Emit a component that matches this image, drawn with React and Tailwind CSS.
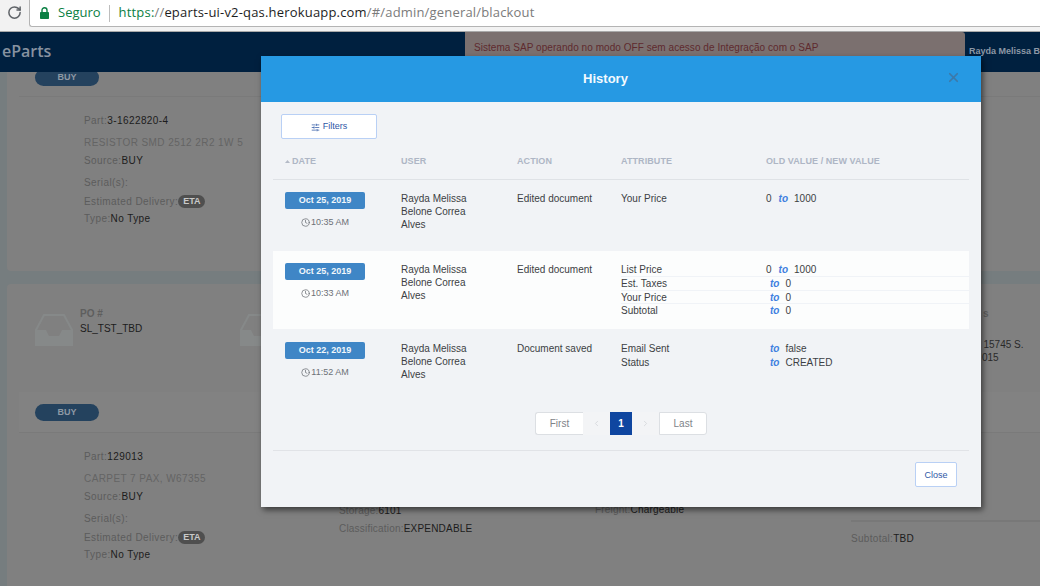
import { RotateCw, X, Clock, SlidersHorizontal, ChevronLeft, ChevronRight } from 'lucide-react'

const HISTORY = [
  {
    date: 'Oct 25, 2019',
    time: '10:35 AM',
    action: 'Edited document',
    rowClass: 'h-[71px] pt-[12px]',
    changes: [{ attr: 'Your Price', from: '0', to: '1000' }],
  },
  {
    date: 'Oct 25, 2019',
    time: '10:33 AM',
    action: 'Edited document',
    rowClass: 'h-[78px] pt-[12px] bg-[#fcfdfd]',
    lined: true,
    changes: [
      { attr: 'List Price', from: '0', to: '1000' },
      { attr: 'Est. Taxes', to: '0' },
      { attr: 'Your Price', to: '0' },
      { attr: 'Subtotal', to: '0' },
    ],
  },
  {
    date: 'Oct 22, 2019',
    time: '11:52 AM',
    action: 'Document saved',
    rowClass: 'h-[71px] pt-[13px]',
    changes: [
      { attr: 'Email Sent', to: 'false' },
      { attr: 'Status', to: 'CREATED' },
    ],
  },
]

const WIDE = 'tracking-[0.42px]'
const TIGHT = 'tracking-[0.2px]'

function Field({ label, value, className = '' }) {
  return (
    <div className={`text-[10px] leading-[13px] text-[#5c5c5c] ${className}`}>
      {label}:<span className="text-[#1c1c1c]">{value}</span>
    </div>
  )
}

function TrayIcon() {
  return (
    <svg width="38" height="32" viewBox="0 0 38 32" className="shrink-0">
      <path d="M9 1h20l8 15v15H1V16z" fill="none" stroke="#868989" strokeWidth="2" />
      <path d="M1 16h10l3 6h10l3-6h10v15H1z" fill="#868989" />
    </svg>
  )
}

function PartBlock({ part, description }) {
  return (
    <div className="pl-[77px] pt-[17px]">
      <Field label="Part" value={part} className={WIDE} />
      <div className={`mt-[9px] text-[10px] leading-[13px] text-[#646464] ${WIDE}`}>{description}</div>
      <Field label="Source" value="BUY" className={`mt-[5px] ${WIDE}`} />
      <Field label="Serial(s)" value="" className={`mt-[9px] ${WIDE}`} />
      <div className={`mt-[6px] flex items-center text-[10px] leading-[13px] text-[#5c5c5c] ${WIDE}`}>
        Estimated Delivery:
        <span className="rounded-full bg-[#4f4f4f] px-[5px] text-[9px] font-bold leading-[13px] tracking-normal text-[#c9c9c9]">ETA</span>
      </div>
      <Field label="Type" value="No Type" className={`mt-[4px] ${WIDE}`} />
    </div>
  )
}

function BuyPill() {
  return (
    <div className="h-[17px] w-[64px] rounded-full bg-[#24425e] text-center text-[9px] font-bold leading-[17px] text-[#8d99a5]">
      BUY
    </div>
  )
}

function BrowserBar() {
  return (
    <div className="flex h-[32px] border-b border-[#a9a9a9] bg-[#f2f2f2] font-['Open_Sans',sans-serif]">
      <div className="flex w-[29px] shrink-0 items-start justify-center pt-[5px]">
        <RotateCw size={15} strokeWidth={2.4} className="text-[#5f6368]" />
      </div>
      <div className="flex h-[27px] flex-1 items-center rounded-bl-[3px] border-b border-l border-[#b4b4b4] bg-white pl-[10px]">
        <svg width="9" height="12" viewBox="0 0 9 12" className="shrink-0">
          <path d="M2 5V3.2a2.5 2.5 0 0 1 5 0V5" fill="none" stroke="#0b8043" strokeWidth="1.4" />
          <rect x="0" y="5" width="9" height="7" rx="0.8" fill="#0b8043" />
        </svg>
        <span className="ml-[9px] text-[13px] text-[#0b8043]">Seguro</span>
        <span className="ml-[8px] mr-[9px] h-[17px] w-px bg-[#bdbdbd]" />
        <span className="text-[13px] tracking-[0.18px] text-[#7b7b7b]">
          <span className="text-[#0b8043]">https:</span>//
          <span className="text-[#1d1d1d]">eparts-ui-v2-qas.herokuapp.com</span>/#/admin/general/blackout
        </span>
      </div>
    </div>
  )
}

function AppHeader() {
  return (
    <div className="relative z-10 flex h-[40px] bg-[#00203f] font-['Liberation_Sans',sans-serif]">
      <div className="w-[465px] shrink-0 pl-[2px] pt-[8px] font-['Open_Sans',sans-serif] text-[16px] font-semibold leading-[22px] text-[#8792a0]">
        eParts
      </div>
      <div className="h-full w-[500px] shrink-0 rounded-bl-[2px] rounded-tr-[3px] bg-[#7b706f] pl-[9px] pt-[9px] text-[10px] leading-[13px] tracking-[0.05px] text-[#5f2a2e]">
        Sistema SAP operando no modo OFF sem acesso de Integração com o SAP
      </div>
      <div className="overflow-hidden whitespace-nowrap pl-[4px] pt-[13px] text-[9px] font-bold leading-[13px] text-[#8d98a6]">
        Rayda Melissa Belone
      </div>
    </div>
  )
}

function PageBehind() {
  return (
    <div className="h-[514px] overflow-hidden bg-[#767d7f] pl-[7px] font-['Liberation_Sans',sans-serif]">
      <div className="h-[199px] rounded-bl-[4px] bg-[#808080]">
        <div className="ml-[12px] flex h-[25px] border-b border-[#7a7a7a] pl-[16px]">
          <div className="-mt-[3px]">
            <BuyPill />
          </div>
        </div>
        <PartBlock part="3-1622820-4" description="RESISTOR SMD 2512 2R2 1W 5" />
      </div>

      <div className="mt-[13px] h-[320px] rounded-tl-[4px] bg-[#808080]">
        <div className="flex h-[108px] pt-[23px]">
          <div className="ml-[28px] mt-[7px]">
            <TrayIcon />
          </div>
          <div className="ml-[7px] w-[160px]">
            <div className="text-[10px] font-bold leading-[13px] text-[#5e5e5e]">PO #</div>
            <div className="mt-[2px] text-[10px] leading-[13px] text-[#1c1c1c]">SL_TST_TBD</div>
          </div>
          <div className="mt-[7px]">
            <TrayIcon />
          </div>
          <div className="ml-[696px] whitespace-nowrap text-[10px] leading-[13px] text-[#2a2a2a]">
            <div className="pl-[9px] font-bold text-[#5e5e5e]">s</div>
            <div className="mt-[18px]">K 15745 S.</div>
            <div className="pl-[8px]">015</div>
          </div>
        </div>
        <div className="ml-[12px] h-[41px] border-b border-[#7a7a7a] bg-[#828282] pl-[16px] pt-[12px]">
          <BuyPill />
        </div>
        <div className="grid grid-cols-[332px_256px_256px_1fr]">
          <PartBlock part="129013" description="CARPET 7 PAX, W67355" />
          <div className="pt-[71px]">
            <Field label="Storage" value="6101" className={TIGHT} />
            <Field label="Classification" value="EXPENDABLE" className={`mt-[5px] ${TIGHT}`} />
          </div>
          <div className="pt-[70px]">
            <Field label="Freight" value="Chargeable" className={TIGHT} />
          </div>
          <div className="pt-[87px]">
            <div className="border-t-2 border-[#787878] pt-[10px]">
              <Field label="Subtotal" value="TBD" className="tracking-[0.3px]" />
            </div>
          </div>
        </div>
      </div>
    </div>
  )
}

function HistoryRow({ row }) {
  return (
    <div className={`grid grid-cols-[128px_116px_104px_145px_1fr] text-[10px] leading-[13px] text-[#3c3f44] ${row.rowClass}`}>
      <div className="pl-[12px]">
        <div className="h-[17px] w-[80px] rounded-[2px] bg-[#3f86c6] text-center text-[9px] font-bold leading-[16px] text-[#f2f7fb]">
          {row.date}
        </div>
        <div className="mt-[7px] flex w-[80px] items-center justify-center text-[9px] text-[#6d7177]">
          <Clock size={9} strokeWidth={2} className="mr-[1px]" />
          {row.time}
        </div>
      </div>
      <div>
        Rayda Melissa
        <br />
        Belone Correa
        <br />
        Alves
      </div>
      <div>{row.action}</div>
      <div className="col-span-2">
        {row.changes.map((c) => (
          <div
            key={c.attr}
            className={`grid h-[14px] grid-cols-[145px_1fr] ${
              row.lined ? 'border-b border-[#f0f3f7] last:border-b-0 nth-3:h-[13px]' : ''
            }`}
          >
            <span>{c.attr}</span>
            <span>
              {c.from}
              <span className={`${c.from ? 'ml-[7px]' : 'ml-[4px]'} mr-[6px] font-bold italic text-[#3f7fe0]`}>to</span>
              {c.to}
            </span>
          </div>
        ))}
      </div>
    </div>
  )
}

function HistoryModal() {
  return (
    <div className="absolute left-[261px] top-[56px] z-20 h-[451px] w-[720px] bg-[#f1f3f6] font-['Liberation_Sans',sans-serif] shadow-[2px_3px_6px_rgba(0,0,0,0.55)]">
      <div className="relative flex h-[46px] items-center justify-center bg-[#2699e3] pr-[31px]">
        <h2 className="pb-[1px] text-[13px] font-bold text-[#f4fafe]">History</h2>
        <X size={15} strokeWidth={2.8} className="absolute right-[20px] top-[14px] text-[#3d79a8]" />
      </div>

      <div className="px-[12px]">
        <button className="ml-[8px] mt-[12px] flex h-[25px] w-[96px] items-center justify-center rounded-[2px] border border-[#b9d0f5] bg-white pt-[1px] text-[9px] text-[#2f58a6]">
          <SlidersHorizontal size={9} className="mr-[3px]" />
          Filters
        </button>

        <div className="mt-[10px] grid h-[31px] grid-cols-[128px_116px_104px_145px_1fr] border-b border-[#dfe2e6] pt-[6px] text-[9px] font-bold leading-[13px] tracking-[0.08px] text-[#aeb6c5]">
          <div className="flex h-[13px] items-center pl-[12px]">
            <svg width="5" height="3" viewBox="0 0 5 3" className="mr-[2px]">
              <path d="M0 3 2.5 0 5 3z" fill="#b4bac6" />
            </svg>
            DATE
          </div>
          <div>USER</div>
          <div>ACTION</div>
          <div>ATTRIBUTE</div>
          <div>OLD VALUE / NEW VALUE</div>
        </div>

        {HISTORY.map((row) => (
          <HistoryRow key={row.time} row={row} />
        ))}

        <div className="mt-[12px] flex h-[23px] justify-center text-[10px] leading-[21px]">
          <span className="w-[48px] rounded-l-[3px] border border-r-0 border-[#dcdfe3] bg-white text-center text-[#808388]">First</span>
          <span className="flex w-[27px] items-center justify-center bg-[#f3f4f6] text-[#d0d3d7]">
            <ChevronLeft size={9} />
          </span>
          <span className="w-[22px] bg-[#0f46a0] text-center font-bold leading-[23px] text-white">1</span>
          <span className="flex w-[27px] items-center justify-center bg-[#f3f4f6] text-[#d0d3d7]">
            <ChevronRight size={9} />
          </span>
          <span className="w-[48px] rounded-r-[3px] border border-[#dcdfe3] bg-white text-center text-[#808388]">Last</span>
        </div>

        <div className="mt-[15px] flex justify-end border-t border-[#e1e3e7] pr-[12px] pt-[11px]">
          <button className="h-[25px] w-[42px] rounded-[2px] border border-[#b9d0f5] bg-white pt-[2px] text-[9px] text-[#2f58a6]">Close</button>
        </div>
      </div>
    </div>
  )
}

export default function App() {
  return (
    <div className="relative h-[586px] w-[1040px] overflow-hidden bg-[#808080]">
      <BrowserBar />
      <AppHeader />
      <PageBehind />
      <HistoryModal />
    </div>
  )
}
